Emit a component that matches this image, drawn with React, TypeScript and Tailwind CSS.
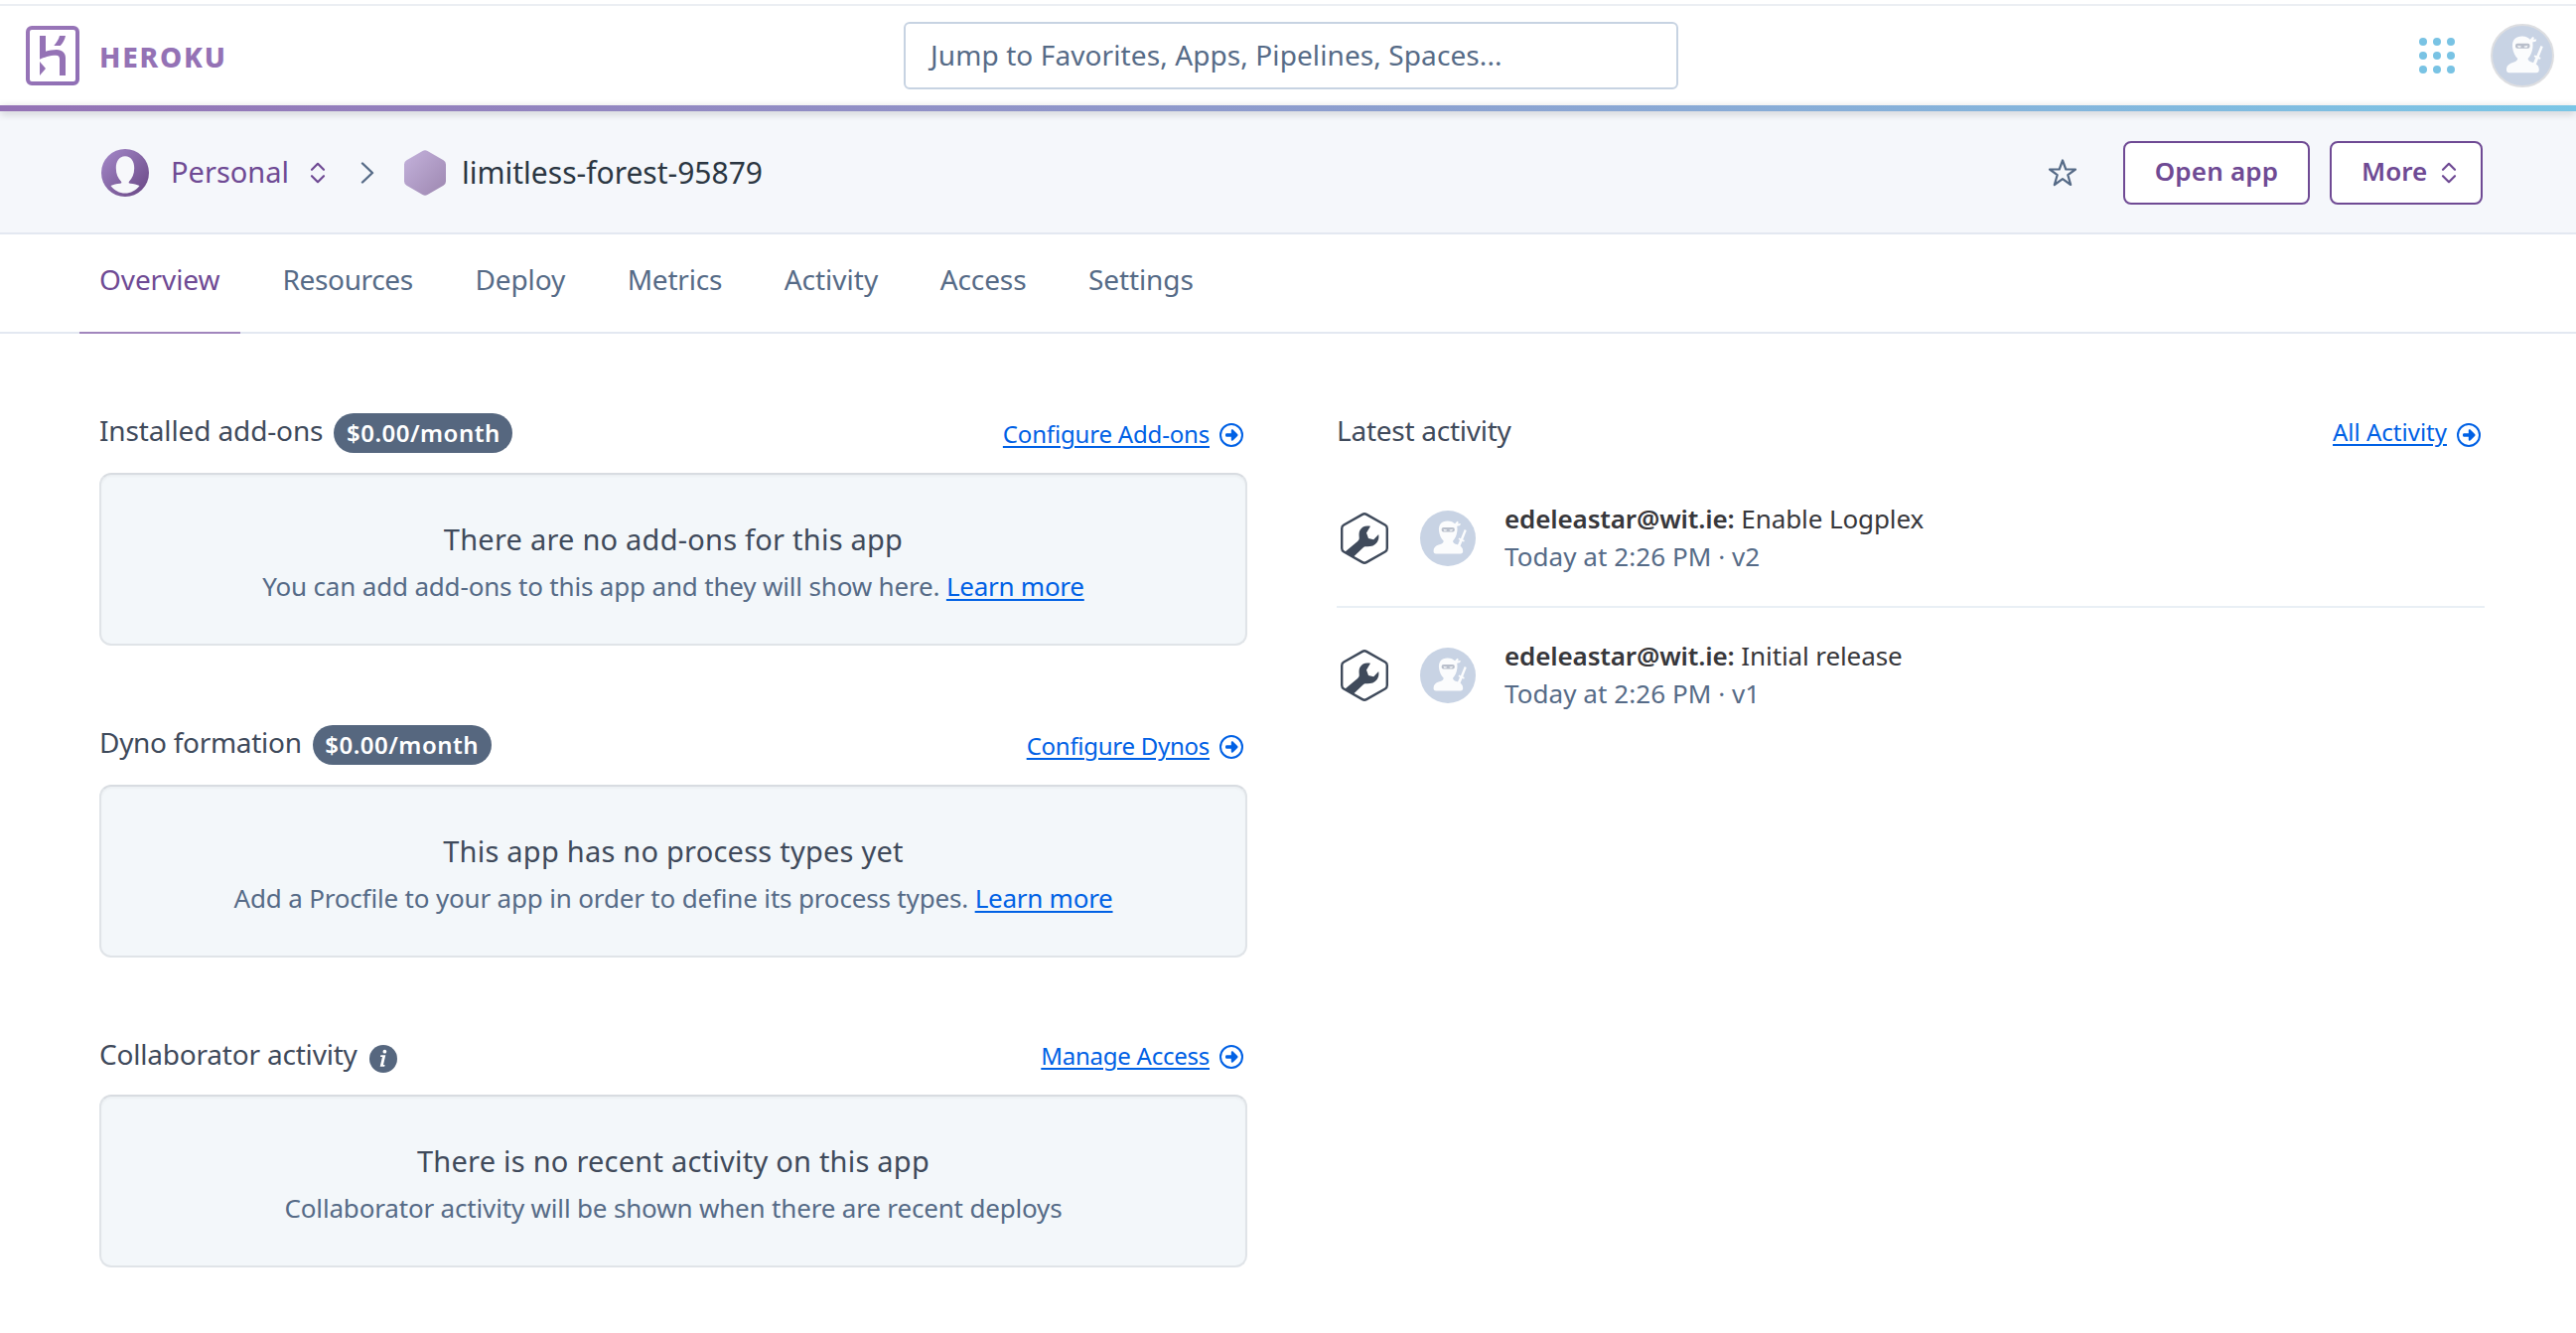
import type { ReactNode } from "react";

function HerokuMark() {
  return (
    <svg width="54" height="60" viewBox="0 0 54 60" fill="none">
      <defs>
        <linearGradient id="mark" x1="0" y1="0" x2="1" y2="1">
          <stop offset="0" stopColor="#9a76b8" />
          <stop offset="1" stopColor="#8f6fb5" />
        </linearGradient>
      </defs>
      <rect x="2" y="2" width="50" height="56" rx="4" stroke="url(#mark)" strokeWidth="4" />
      <g fill="#9472b5">
        <path d="M14 10h6v15.8c3-1 7-1.800 11-1.800 6 0 9 3.600 9 8.500V50h-6V33.500c0-2.300-1-3.700-3.500-3.700-6.500 0-12.500 2.200-16.500 4z" />
        <path d="M14 36l6 7-6 7z" />
        <path d="M34 10h6c-.7 3.800-2.500 7.200-5.200 10h-6.500c2.700-3.200 5-6.500 5.700-10z" />
      </g>
    </svg>
  );
}

function PersonIcon() {
  return (
    <svg width="48" height="48" viewBox="0 0 48 48">
      <defs>
        <linearGradient id="person" x1="0" y1="0" x2="1" y2="1">
          <stop offset="0" stopColor="#a58aca" />
          <stop offset="1" stopColor="#684583" />
        </linearGradient>
      </defs>
      <circle cx="24" cy="24" r="24" fill="url(#person)" />
      <path
        fill="#f7f8fb"
        d="M24 7.300c-6 0-9.200 5-9.200 12 0 6 2 10.200 5.200 13.400.8 1.300.2 1.800-1.300 2-3.200.4-6.700 1.100-9.200 2.400C13.200 42 18.400 44.600 24 44.600S34.800 42 38.500 37.100c-2.500-1.300-6-2-9.200-2.400-1.500-.2-2.100-.7-1.300-2 3.200-3.200 5.200-7.400 5.200-13.400 0-7-3.200-12-9.200-12z"
      />
    </svg>
  );
}

function UpDown({ className }: { className?: string }) {
  return (
    <svg className={className} width="16" height="22" viewBox="0 0 16 22" fill="none" stroke="#6f4a94" strokeWidth="2.200" strokeLinecap="round" strokeLinejoin="round">
      <path d="M2 7.800L8 1.800l6 6M2 14.200l6 6 6-6" />
    </svg>
  );
}

function AppHexagon() {
  return (
    <svg width="42" height="46" viewBox="0 0 42 46">
      <defs>
        <linearGradient id="hex" x1="0" y1="0" x2="1" y2="1">
          <stop offset="0" stopColor="#c4b2dc" />
          <stop offset="1" stopColor="#9d87b0" />
        </linearGradient>
      </defs>
      <path
        fill="url(#hex)"
        d="M18.500.900a5 5 0 0 1 5 0l16 9.300a5 5 0 0 1 2.500 4.300v17a5 5 0 0 1-2.500 4.300l-16 9.300a5 5 0 0 1-5 0l-16-9.300A5 5 0 0 1 0 31.500v-17a5 5 0 0 1 2.500-4.300z"
      />
    </svg>
  );
}

function NinjaAvatar({ size, ring }: { size: number; ring?: boolean }) {
  return (
    <svg width={size} height={size} viewBox={ring ? "0 0 64 64" : "1 1 62 62"} className="shrink-0">
      <circle cx="32" cy="32" r="31" fill="#c8d3e4" stroke={ring ? "#dddee1" : "none"} strokeWidth="2" />
      <g fill="#fbfcfd">
        <path d="M31.500 12.500c4 0 6.500 1.200 8.300 3.200l2.600-2.700 1.600.9-.9 1.900 3.200-.3-.8 2.200-3.300.8c.4 1.600.4 3.400.2 5.500-.5 4.700-2.400 8.500-4.900 11 .3 2 2 3 5 4 4.200 1.400 6.300 3.400 6.300 7.200 0 2-.8 3-2.800 3H18.800c-2 0-2.800-1-2.800-3 0-3.800 2.100-5.800 6.300-7.200 3-1 4.700-2 5-4-2.700-2.500-4.600-6.300-5.200-11-.9-7.200 2.700-11.500 9.400-11.500z" />
        <path d="M50.500 22l2.300 1.100-4 10.200 1.800.8-.7 1.700-1.900-.6-2.500 6.300-2.800-1.500 2.600-6-1.700-.9.8-1.600 1.900.7z" />
      </g>
      <rect x="25" y="19.800" width="14.500" height="5" rx="2" fill="#b9bfcb" />
      <path fill="#f4f6f9" d="M27 21.700l4 .9-.8 1.200h-2.400zM37.500 21.700l-4 .9.800 1.200h2.400z" />
    </svg>
  );
}

function AppsGrid() {
  return (
    <div className="grid grid-cols-3 gap-1.5">
      {Array.from({ length: 9 }, (_, i) => (
        <span key={i} className="size-2 rounded-full bg-[#79c3e4]" />
      ))}
    </div>
  );
}

function ArrowCircle() {
  return (
    <svg width="24" height="24" viewBox="0 0 24 24" fill="none" className="shrink-0">
      <circle cx="12" cy="12" r="11" stroke="#0061e5" strokeWidth="2" />
      <path
        fill="#0061e5"
        d="M7.400 10.200h4.400V7.600c0-1.200 1.200-1.700 2-.9l4.300 4.300c.6.600.6 1.400 0 2l-4.300 4.300c-.8.800-2 .3-2-.9v-2.600H7.400a1.400 1.400 0 0 1-1.400-1.400v-.8a1.400 1.400 0 0 1 1.400-1.400z"
      />
    </svg>
  );
}

function InfoIcon() {
  return (
    <svg width="28" height="28" viewBox="0 0 28 28" className="mt-2 ml-3 shrink-0">
      <circle cx="14" cy="14" r="14" fill="#56677f" />
      <g fill="#fff">
        <circle cx="15.400" cy="6.700" r="1.900" />
        <path d="M11.400 10.300h4.900l-2.300 9.800h1.600l-.4 1.700h-4.500l2.300-9.800h-2z" />
      </g>
    </svg>
  );
}

function WrenchHexagon() {
  return (
    <svg width="48" height="52" viewBox="0 0 48 52" fill="none" className="shrink-0">
      <path
        stroke="#3f4a5b"
        strokeWidth="2.400"
        d="M22 1.900a4 4 0 0 1 4 0l18.800 10.600a4 4 0 0 1 2 3.500v20a4 4 0 0 1-2 3.500L26 50.100a4 4 0 0 1-4 0L3.200 39.500a4 4 0 0 1-2-3.500V16a4 4 0 0 1 2-3.500z"
      />
      <path
        fill="#3f4a5b"
        d="M30 13.800c-4.500-1.200-8.500.2-10.500 4-1.300 2.500-1 5-.8 7.300.2 1.800-.4 2.700-1.600 3.900L4.500 39.500l8 5.500 10-9.500c1-1 1.900-1.300 3.400-1.200 4.200.2 8.300-.7 10.800-4.300 1.700-2.500 2-5 1.500-8l-5 5.200-5.200-1.200-2-5.400z"
      />
    </svg>
  );
}

function Badge({ children }: { children: ReactNode }) {
  return (
    <span className="ml-[11px] flex h-10 w-[180px] items-center justify-center rounded-full bg-[#56677f] pb-px text-2xl font-semibold tracking-[0.5px] text-white">
      {children}
    </span>
  );
}

function ActionLink({ children, className }: { children: ReactNode; className: string }) {
  return (
    <a className="ml-auto mr-1 flex items-center gap-2.5 text-[#0061e5]">
      <span className={`text-2xl underline decoration-2 underline-offset-[3px] ${className}`}>{children}</span>
      <span className="mt-1">
        <ArrowCircle />
      </span>
    </a>
  );
}

function EmptyBox({ title, children }: { title: string; children: ReactNode }) {
  return (
    <div className="mt-5 h-[174px] rounded-[12px] border-2 border-[#e0e4e8] border-t-[#d8dce1] bg-[#f3f7fa] pt-[41px] text-center shadow-[inset_0_2px_2px_rgba(0,0,0,0.03)]">
      <p className="text-[29px] leading-[48px] tracking-[0.23px] text-[#3f4a5b]">{title}</p>
      <p className="mt-px text-[26px] leading-[44px] tracking-[-0.17px] text-[#566b87]">{children}</p>
    </div>
  );
}

function LearnMore() {
  return (
    <a className="text-[#0061e5] tracking-[-0.25px] underline decoration-2 underline-offset-[3px]">Learn more</a>
  );
}

function ActivityRow({ action, version, last }: { action: string; version: string; last?: boolean }) {
  return (
    <li className={`flex h-[138px] items-center border-b-2 pl-1 ${last ? "border-transparent" : "border-[#e9eff5]"}`}>
      <WrenchHexagon />
      <span className="ml-8">
        <NinjaAvatar size={56} />
      </span>
      <div className="ml-[29px] pb-0.5 text-[26px] leading-[38px]">
        <p className="text-[#37373b]">
          <span className="font-semibold tracking-[-0.14px]">edeleastar@wit.ie:</span>{" "}
          <span className="tracking-[-0.1px]">{action}</span>
        </p>
        <p className="tracking-[0.06px] text-[#566b87]">Today at 2:26 PM · {version}</p>
      </div>
    </li>
  );
}

const tabs = [
  { label: "Overview", tone: "w-[162px] border-b-2 border-[#a186bd] tracking-[-0.1px] text-[#6f4a94]" },
  { label: "Resources", tone: "tracking-[-0.35px] text-[#566b87]" },
  { label: "Deploy", tone: "tracking-[-0.1px] text-[#566b87]" },
  { label: "Metrics", tone: "tracking-[-0.2px] text-[#566b87]" },
  { label: "Activity", tone: "tracking-[0px] text-[#566b87]" },
  { label: "Access", tone: "tracking-[-0.1px] text-[#566b87]" },
  { label: "Settings", tone: "tracking-[-0.1px] text-[#566b87]" },
];

export default function App() {
  return (
    <div className="h-[1342px] w-full overflow-hidden bg-white pt-1 font-['Noto_Sans',sans-serif]">
      <header className="flex h-[102px] items-center border-t-2 border-[#ebeef3] pl-[26px] pr-[22px]">
        <div className="flex flex-1 items-center">
          <HerokuMark />
          <span className="mt-0.5 ml-5 text-[28px] font-extrabold tracking-[1.8px] text-[#9472b5]">HEROKU</span>
        </div>
        <div className="ml-0.5 flex h-[68px] w-[780px] items-center rounded-md border-2 border-[#c7d3e2] pb-0.5 pl-[25px] text-[28px] tracking-[0.1px] text-[#566b87]">
          Jump to Favorites, Apps, Pipelines, Spaces...
        </div>
        <div className="flex flex-1 items-center justify-end gap-9">
          <AppsGrid />
          <NinjaAvatar size={64} ring />
        </div>
      </header>
      <div className="relative h-1.5 bg-linear-to-r from-[#9472b5] to-[#7ac6e6] shadow-[0_2px_8px_rgba(0,0,0,0.2)]" />

      <div className="flex h-[124px] items-center border-b-2 border-[#e3e8f1] bg-[#f5f7fb] pt-0.5 pl-[102px] pr-[94px]">
        <PersonIcon />
        <span className="ml-[22px] pb-0.5 text-[29px] text-[#6f4a94]">Personal</span>
        <UpDown className="ml-[21px]" />
        <svg className="ml-[35px]" width="14" height="22" viewBox="0 0 14 22" fill="none" stroke="#566b87" strokeWidth="2.400" strokeLinecap="round" strokeLinejoin="round">
          <path d="M2 1.500L12 11 2 20.500" />
        </svg>
        <span className="ml-[30px]">
          <AppHexagon />
        </span>
        <span className="ml-4 pb-0.5 text-[30px] text-[#2b3642]">limitless-forest-95879</span>

        <svg className="ml-auto" width="30" height="30" viewBox="0 0 30 30" fill="none" stroke="#566b87" strokeWidth="2.200" strokeLinejoin="round">
          <path d="M15 2.500l3.300 9h9.700l-7.700 5.600 2.900 9.900-8.200-5.800L6.800 27l2.900-9.900L2 11.500h9.700z" />
        </svg>
        <a className="ml-[46px] flex h-16 w-[188px] items-center justify-center rounded-lg border-2 border-[#6f4a94] bg-white pb-[3px] text-[26px] font-semibold tracking-[0.2px] text-[#6f4a94]">
          Open app
        </a>
        <a className="ml-5 flex h-16 w-[154px] items-center rounded-lg border-2 border-[#6f4a94] bg-white pl-[30px] text-[26px] font-semibold text-[#6f4a94]">
          <span className="pb-[3px]">More</span>
          <UpDown className="ml-3.5" />
        </a>
      </div>

      <nav className="flex h-[100px] gap-[22.5px] border-b-2 border-[#e3e8f1] pl-20">
        {tabs.map(({ label, tone }) => (
          <a key={label} className={`h-[100px] px-5 text-[28px] leading-[90px] ${tone}`}>
            {label}
          </a>
        ))}
      </nav>

      <main className="grid grid-cols-[1156px_1156px] gap-[90px] pt-20 pl-[100px]">
        <div>
          <section>
            <div className="flex h-10 items-center">
              <h2 className="pb-1.5 text-[28px] tracking-[-0.13px] text-[#3f4a5b]">Installed add-ons</h2>
              <Badge>$0.00/month</Badge>
              <ActionLink className="pt-px tracking-[-0.18px]">Configure Add-ons</ActionLink>
            </div>
            <EmptyBox title="There are no add-ons for this app">
              You can add add-ons to this app and they will show here. <LearnMore />
            </EmptyBox>
          </section>
          <section className="mt-20">
            <div className="flex h-10 items-center">
              <h2 className="pb-1.5 text-[28px] tracking-[-0.3px] text-[#3f4a5b]">Dyno formation</h2>
              <Badge>$0.00/month</Badge>
              <ActionLink className="pt-px tracking-[-0.27px]">Configure Dynos</ActionLink>
            </div>
            <EmptyBox title="This app has no process types yet">
              Add a Procfile to your app in order to define its process types. <LearnMore />
            </EmptyBox>
          </section>
          <section className="mt-[78px]">
            <div className="flex h-10 items-center">
              <h2 className="pb-0.5 text-[28px] tracking-[-0.2px] text-[#3f4a5b]">Collaborator activity</h2>
              <InfoIcon />
              <ActionLink className="pt-px tracking-[-0.25px]">Manage Access</ActionLink>
            </div>
            <EmptyBox title="There is no recent activity on this app">
              Collaborator activity will be shown when there are recent deploys
            </EmptyBox>
          </section>
        </div>

        <section>
          <div className="flex h-10 items-center">
            <h2 className="pb-1.5 text-[28px] tracking-[-0.25px] text-[#3f4a5b]">Latest activity</h2>
            <ActionLink className="pb-[3px]">All Activity</ActionLink>
          </div>
          <ul className="mt-[18px]">
            <ActivityRow action="Enable Logplex" version="v2" />
            <ActivityRow action="Initial release" version="v1" last />
          </ul>
        </section>
      </main>
    </div>
  );
}
